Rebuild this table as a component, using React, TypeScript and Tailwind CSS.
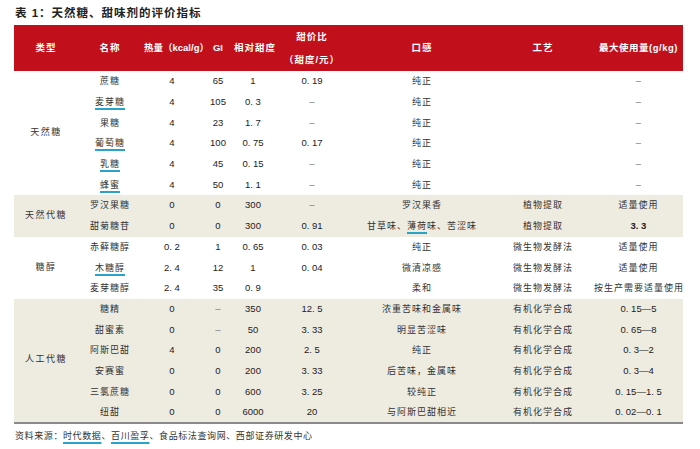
import React from "react";

type Cell = { t: string; u?: boolean; parts?: { t: string; u?: boolean }[]; b?: boolean };

const isCJK = (s: string) => /[\u3000-\u9fff\uff00-\uffef]/.test(s);

const C = (t: string, u = false): Cell => ({ t, u });

type Row = Cell[];

const groups: { label: string; beige: boolean; rows: Row[] }[] = [
  {
    label: "天然糖",
    beige: false,
    rows: [
      [C("蔗糖"), C("4"), C("65"), C("1"), C("0. 19"), C("纯正"), C(""), C("–")],
      [C("麦芽糖", true), C("4"), C("105"), C("0. 3"), C("–"), C("纯正"), C(""), C("–")],
      [C("果糖"), C("4"), C("23"), C("1. 7"), C("–"), C("纯正"), C(""), C("–")],
      [C("葡萄糖", true), C("4"), C("100"), C("0. 75"), C("0. 17"), C("纯正"), C(""), C("–")],
      [C("乳糖", true), C("4"), C("45"), C("0. 15"), C("–"), C("纯正"), C(""), C("–")],
      [C("蜂蜜", true), C("4"), C("50"), C("1. 1"), C("–"), C("纯正"), C(""), C("–")],
    ],
  },
  {
    label: "天然代糖",
    beige: true,
    rows: [
      [C("罗汉果糖"), C("0"), C("0"), C("300"), C("–"), C("罗汉果香"), C("植物提取"), C("适量使用")],
      [
        C("甜菊糖苷"),
        C("0"),
        C("0"),
        C("300"),
        C("0. 91"),
        { t: "", parts: [{ t: "甘草味、" }, { t: "薄荷", u: true }, { t: "味、苦涩味" }] },
        C("植物提取"),
        { t: "3. 3", b: true },
      ],
    ],
  },
  {
    label: "糖醇",
    beige: false,
    rows: [
      [C("赤藓糖醇"), C("0. 2"), C("1"), C("0. 65"), C("0. 03"), C("纯正"), C("微生物发酵法"), C("适量使用")],
      [C("木糖醇", true), C("2. 4"), C("12"), C("1"), C("0. 04"), C("微清凉感"), C("微生物发酵法"), C("适量使用")],
      [C("麦芽糖醇"), C("2. 4"), C("35"), C("0. 9"), C(""), C("柔和"), C("微生物发酵法"), C("按生产需要适量使用")],
    ],
  },
  {
    label: "人工代糖",
    beige: true,
    rows: [
      [C("糖精"), C("0"), C("–"), C("350"), C("12. 5"), C("浓重苦味和金属味"), C("有机化学合成"), C("0. 15—5")],
      [C("甜蜜素"), C("0"), C("–"), C("50"), C("3. 33"), C("明显苦涩味"), C("有机化学合成"), C("0. 65—8")],
      [C("阿斯巴甜"), C("4"), C("0"), C("200"), C("2. 5"), C("纯正"), C("有机化学合成"), C("0. 3—2")],
      [C("安赛蜜"), C("0"), C("0"), C("200"), C("3. 33"), C("后苦味，金属味"), C("有机化学合成"), C("0. 3—4")],
      [C("三氯蔗糖"), C("0"), C("0"), C("600"), C("3. 25"), C("较纯正"), C("有机化学合成"), C("0. 15—1. 5")],
      [C("纽甜"), C("0"), C("0"), C("6000"), C("20"), C("与阿斯巴甜相近"), C("有机化学合成"), C("0. 02—0. 1")],
    ],
  },
];

const ul = "underline decoration-[#2aa3c6] decoration-[1.5px] underline-offset-[3px]";

function CellView({ c }: { c: Cell }) {
  if (c.parts) {
    return (
      <span className="tracking-[1px] text-[9px]">
        {c.parts.map((p, i) => (
          <span key={i} className={p.u ? ul : ""}>
            {p.t}
          </span>
        ))}
      </span>
    );
  }
  const cjk = isCJK(c.t);
  const dash = c.t === "–";
  return (
    <span
      className={[
        cjk ? "tracking-[1px] text-[9px]" : "text-[9.5px] text-[#222]",
        c.u ? ul : "",
        c.b ? "font-bold" : "",
        dash ? "text-[#777]" : "",
      ].join(" ")}
    >
      {c.t}
    </span>
  );
}

export default function App() {
  const totalRows = groups.reduce((a, g) => a + g.rows.length, 0);
  let idx = 0;
  return (
    <div
      className="w-[700px] h-[449px] bg-white text-[#333]"
      style={{ fontFamily: '"Liberation Sans", "Noto Sans CJK SC", sans-serif' }}
    >
      <div className="h-[25px] pl-[15px] pt-[5px] text-[11.5px] font-semibold leading-[17px] text-[#222] tracking-[1px]">
        表 1：天然糖、甜味剂的评价指标
      </div>
      <table className="ml-[14px] w-[669px] table-fixed border-collapse">
        <colgroup>
          <col className="w-[64px]" />
          <col className="w-[64px]" />
          <col className="w-[60px]" />
          <col className="w-[32px]" />
          <col className="w-[38px]" />
          <col className="w-[80px]" />
          <col className="w-[140px]" />
          <col className="w-[102px]" />
          <col className="w-[89px]" />
        </colgroup>
        <thead>
          <tr className="h-[41px] bg-[#c20f1c] text-white text-[9.5px] font-bold">
            <th className="p-0 text-center tracking-[1px]">类型</th>
            <th className="p-0 text-center tracking-[1px]">名称</th>
            <th className="p-0 text-center whitespace-nowrap">
              <span className="inline-block translate-x-[2px]">热量（kcal/g）</span>
            </th>
            <th className="p-0 text-center">GI</th>
            <th className="p-0 text-center tracking-[1px] whitespace-nowrap">相对甜度</th>
            <th className="p-0 text-center tracking-[1px] whitespace-nowrap leading-[23px]">
              <div>甜价比</div>
              <div>（甜度/元）</div>
            </th>
            <th className="p-0 text-center tracking-[1px]">口感</th>
            <th className="p-0 text-center tracking-[1px]">工艺</th>
            <th className="p-0 text-center tracking-[0.5px] whitespace-nowrap">最大使用量(g/kg)</th>
          </tr>
        </thead>
        <tbody className="text-[9px]">
          {groups.map((g, gi) =>
            g.rows.map((r, ri) => {
              idx++;
              const last = idx === totalRows;
              return (
                <tr
                  key={`${gi}-${ri}`}
                  className={[
                    "h-[20.7px]",
                    g.beige ? "bg-[#eeebe1]" : "bg-white",
                    last ? "border-b-2 border-[#8a8a8a]" : "",
                  ].join(" ")}
                >
                  {ri === 0 && (
                    <td
                      rowSpan={g.rows.length}
                      className="p-0 text-center align-middle tracking-[1.5px] whitespace-nowrap"
                    >
                      {g.label}
                    </td>
                  )}
                  {r.map((c, ci) => (
                    <td key={ci} className="p-0 text-center align-middle whitespace-nowrap leading-[12px]">
                      <CellView c={c} />
                    </td>
                  ))}
                </tr>
              );
            })
          )}
        </tbody>
      </table>
      <div className="pl-[15px] pt-[5px] text-[9px] leading-[14px] tracking-[0.6px] text-[#333]">
        资料来源：<span className={ul}>时代数据</span>、<span className={ul}>百川盈孚</span>
        、食品标法查询网、西部证券研发中心
      </div>
    </div>
  );
}
